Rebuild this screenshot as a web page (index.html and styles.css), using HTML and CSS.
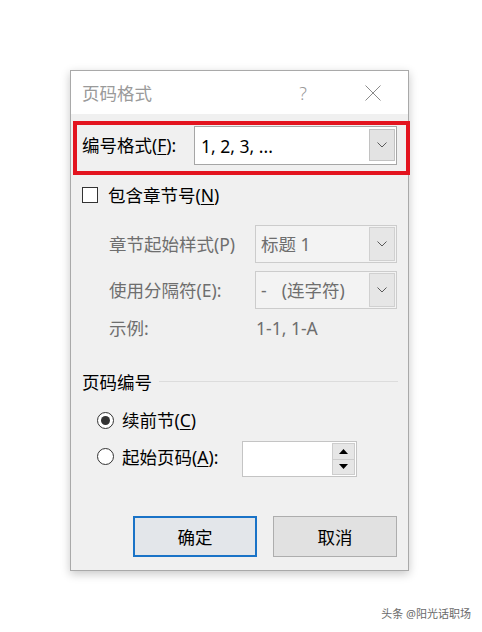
FILE: index.html
```html
<!DOCTYPE html>
<html lang="zh-CN">
<head>
    <meta charset="UTF-8">
    <meta name="viewport" content="width=device-width, initial-scale=1.0">
    <title>页码格式</title>
    <link rel="stylesheet" href="styles.css">
</head>
<body>
    <div class="page">
        <div class="dialog">
            <div class="titlebar">
                <span class="title">页码格式</span>
                <span class="help">?</span>
                <svg class="close" width="16" height="16" viewBox="0 0 16 16">
                    <path d="M0.5 0.5L15.5 15.5M15.5 0.5L0.5 15.5" />
                </svg>
            </div>

            <div class="dialog-body">
                <!-- number format -->
                <div class="highlight">
                    <span class="format-label">编号格式(<u>F</u>):</span>
                    <div class="combo combo-format">
                        <span class="combo-value">1, 2, 3, ...</span>
                        <span class="combo-btn">
                            <svg width="10" height="6" viewBox="0 0 10 6"><path d="M0.5 0.5L5 5L9.5 0.5" /></svg>
                        </span>
                    </div>
                </div>

                <!-- chapter numbers -->
                <div class="row check-row">
                    <span class="checkbox"></span>
                    <span>包含章节号(<u>N</u>)</span>
                </div>

                <div class="row sub-row disabled chapter-style">
                    <span class="sub-label">章节起始样式(P)</span>
                    <div class="combo combo-sub">
                        <span class="combo-value">标题 1</span>
                        <span class="combo-btn">
                            <svg width="10" height="6" viewBox="0 0 10 6"><path d="M0.5 0.5L5 5L9.5 0.5" /></svg>
                        </span>
                    </div>
                </div>

                <div class="row sub-row disabled separator">
                    <span class="sub-label">使用分隔符(E):</span>
                    <div class="combo combo-sub">
                        <span class="combo-value">-<span class="sep-name">(连字符)</span></span>
                        <span class="combo-btn">
                            <svg width="10" height="6" viewBox="0 0 10 6"><path d="M0.5 0.5L5 5L9.5 0.5" /></svg>
                        </span>
                    </div>
                </div>

                <div class="row example-row disabled">
                    <span class="sub-label">示例:</span>
                    <span class="example-value">1-1, 1-A</span>
                </div>

                <!-- page numbering -->
                <div class="row group-head">
                    <span>页码编号</span>
                    <span class="group-line"></span>
                </div>

                <div class="row radio-row continue">
                    <span class="radio checked"></span>
                    <span>续前节(<u>C</u>)</span>
                </div>

                <div class="row radio-row start-at">
                    <span class="radio"></span>
                    <span class="start-label">起始页码(<u>A</u>):</span>
                    <div class="spin">
                        <span class="spin-input"></span>
                        <span class="spin-btns">
                            <span class="spin-btn">
                                <svg width="9" height="5" viewBox="0 0 9 5"><path d="M4.5 0L9 5H0Z" /></svg>
                            </span>
                            <span class="spin-btn">
                                <svg width="9" height="5" viewBox="0 0 9 5"><path d="M0 0H9L4.5 5Z" /></svg>
                            </span>
                        </span>
                    </div>
                </div>

                <div class="row buttons">
                    <button class="btn btn-default">确定</button>
                    <button class="btn">取消</button>
                </div>
            </div>
        </div>

        <div class="watermark">头条 @阳光话职场</div>
    </div>
</body>
</html>
```

FILE: styles.css
```css
body, html {
    margin: 0;
    padding: 0;
    background-color: #fff;
    font-family: "Noto Sans", "Noto Sans CJK SC", sans-serif;
}

.page {
    padding: 70px 11px 0 70px;
}

.dialog {
    width: 337px;
    border: 1px solid #a9a9a9;
    background-color: #f0f0f0;
    box-shadow: 0 3px 9px rgba(0, 0, 0, 0.22);
    font-size: 17.5px;
    line-height: 24px;
    color: #000;
}

.titlebar {
    height: 43px;
    background-color: #fff;
    display: flex;
    align-items: center;
    padding-left: 11px;
}

.title {
    flex: 1;
    color: #9a9a9a;
}

.help {
    width: 20px;
    margin-right: 52px;
    text-align: center;
    color: #9a9a9a;
    font-size: 18px;
    font-weight: 300;
}

.close {
    margin-right: 27px;
    stroke: #8a8a8a;
    stroke-width: 1;
    fill: none;
}

.dialog-body {
    display: flex;
    flex-direction: column;
    padding-bottom: 13px;
}

u {
    text-decoration-thickness: 1px;
    text-underline-offset: 2px;
}

.row {
    display: flex;
    align-items: center;
}

.disabled {
    color: #6e6e6e;
}

/* red frame round the format row */
.highlight {
    box-sizing: border-box;
    width: 337px;
    height: 54px;
    margin: 7px 0 0 2px;
    border: 4px solid #e3141f;
    padding: 1px 0 0 5px;
    display: flex;
    align-items: flex-start;
}

.format-label {
    width: 112px;
    line-height: 39px;
}

.combo {
    box-sizing: border-box;
    display: flex;
    border: 1px solid #a6a6a6;
    background-color: #fff;
    padding: 1px;
}

.combo-format {
    width: 203px;
    height: 39px;
}

.combo-sub {
    width: 142px;
    height: 38px;
    border-color: #cccccc;
    background-color: #f3f3f3;
}

.combo-value {
    flex: 1;
    display: flex;
    align-items: center;
    padding-left: 5px;
}

.combo-sub .combo-value {
    padding-left: 4px;
}

.sep-name {
    margin-left: 15px;
}

.combo-btn {
    box-sizing: border-box;
    width: 26px;
    margin: 1px 0 2px;
    border: 1px solid #c2c2c2;
    background-color: #e3e3e3;
    display: flex;
    align-items: center;
    justify-content: center;
}

.combo-sub .combo-btn {
    border-color: #d0d0d0;
    background-color: #e6e6e6;
    margin: 0;
}

.combo-btn svg {
    stroke: #5a5a5a;
    stroke-width: 1;
    fill: none;
}

.check-row {
    height: 24px;
    margin-top: 8px;
    padding-left: 11px;
    gap: 10px;
}

.checkbox {
    box-sizing: border-box;
    width: 16px;
    height: 16px;
    border: 1px solid #333;
    background-color: #fff;
}

.sub-row {
    height: 38px;
    padding-left: 38px;
}

.chapter-style {
    margin-top: 18px;
}

.separator {
    margin-top: 8px;
}

.sub-label {
    width: 146px;
}

.example-row {
    height: 24px;
    margin-top: 7px;
    padding-left: 38px;
}

.example-value {
    padding-left: 1px;
}

.group-head {
    height: 24px;
    margin-top: 30px;
    padding: 0 10px 0 11px;
}

.group-line {
    flex: 1;
    height: 1px;
    margin: 0 0 1px 7px;
    background-color: #dcdcdc;
}

.radio-row {
    padding-left: 26px;
}

.continue {
    height: 24px;
    margin-top: 14px;
}

.start-at {
    height: 36px;
    margin-top: 9px;
}

.radio {
    box-sizing: border-box;
    width: 17px;
    height: 17px;
    margin-right: 8px;
    border: 1px solid #333;
    border-radius: 50%;
    background-color: #fff;
    display: flex;
    align-items: center;
    justify-content: center;
}

.start-at .radio {
    margin-top: -5px;
}

.start-at .start-label {
    margin-top: -5px;
}

.radio.checked::after {
    content: "";
    width: 9px;
    height: 9px;
    border-radius: 50%;
    background-color: #333;
}

.start-label {
    width: 120px;
}

.spin {
    box-sizing: border-box;
    width: 115px;
    height: 36px;
    border: 1px solid #c4c4c4;
    background-color: #fff;
    display: flex;
    padding: 1px 1px 1px 0;
}

.spin-input {
    flex: 1;
}

.spin-btns {
    width: 23px;
    display: flex;
    flex-direction: column;
}

.spin-btn {
    flex: 1;
    border: 1px solid #cdcdcd;
    background-color: #e6e6e6;
    display: flex;
    align-items: center;
    justify-content: center;
}

.spin-btn + .spin-btn {
    border-top: none;
}

.spin-btn svg {
    fill: #000;
}

.buttons {
    margin-top: 39px;
    padding-left: 62px;
    gap: 16px;
}

.btn {
    box-sizing: border-box;
    width: 124px;
    height: 41px;
    border: 1px solid #adadad;
    background-color: #e1e1e1;
    font-family: inherit;
    font-size: 17.5px;
    color: #000;
    padding: 0;
}

.btn-default {
    border: 2px solid #1a73c7;
    background-color: #e3e6ea;
}

.watermark {
    margin-top: 35px;
    text-align: right;
    font-size: 11px;
    line-height: 16px;
    color: #6a6a6a;
}
```
